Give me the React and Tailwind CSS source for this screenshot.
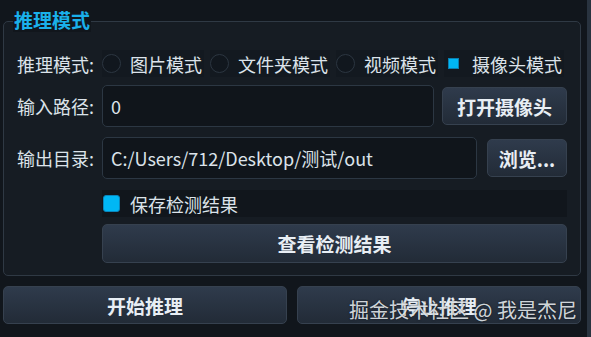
import React from 'react';

const font = { fontFamily: '"Noto Sans CJK SC", "Noto Sans", sans-serif' };

function Radio({ label, checked }) {
  return (
    <div className="flex h-full items-center gap-[9px] bg-[#131920] pr-[2px]">
      <span className="flex h-[19px] w-[19px] items-center justify-center">
        {checked ? (
          <span className="h-[11px] w-[11px] border border-[#0a7fb0] bg-[#00b7f5]" />
        ) : (
          <span className="h-[19px] w-[19px] rounded-full border border-[#2c3641] bg-[#11171e]" />
        )}
      </span>
      <span className="leading-none">{label}</span>
    </div>
  );
}

function Btn({ children, className = '' }) {
  return (
    <button
      className={`flex items-center justify-center rounded-[5px] border border-[#36414f] bg-gradient-to-b from-[#2f3b4c] to-[#222b37] text-[19px] font-bold leading-none text-[#e8eef4] ${className}`}
    >
      {children}
    </button>
  );
}

export default function App() {
  return (
    <div className="relative flex h-[337px] w-[591px] overflow-hidden bg-[#11161c] text-[18px] text-[#dce3ea]" style={font}>
      <div className="flex w-[587px] flex-col pl-[3px] pr-[6px]">
        {/* group box */}
        <div className="relative mt-[21px] h-[255px] w-[578px] rounded-[5px] border border-[#2f3944] bg-[#161c23] px-[13px] pt-[28px]">
          <div className="absolute left-[9px] top-[-14px] bg-[#11161c] px-[1px] text-[19px] font-bold leading-[24px] text-[#1ab0ea]">
            推理模式
          </div>

          <div className="flex h-[27px] items-center">
            <div className="w-[85px] leading-none">推理模式:</div>
            <div className="flex h-full items-center gap-[6px]">
              <Radio label="图片模式" />
              <Radio label="文件夹模式" />
              <Radio label="视频模式" />
              <Radio label="摄像头模式" checked />
            </div>
          </div>

          <div className="mt-[8px] flex h-[42px] items-center">
            <div className="w-[85px]">输入路径:</div>
            <div className="flex h-full w-[332px] items-center rounded-[5px] border border-[#2c3743] bg-[#10151b] px-[8px]">0</div>
            <Btn className="ml-[8px] h-[38px] w-[125px]">打开摄像头</Btn>
          </div>

          <div className="mt-[10px] flex h-[42px] items-center">
            <div className="w-[85px]">输出目录:</div>
            <div className="flex h-full w-[375px] items-center rounded-[5px] border border-[#2c3743] bg-[#10151b] px-[8px]">
              C:/Users/712/Desktop/测试/out
            </div>
            <Btn className="ml-[10px] h-[38px] w-[80px]">浏览...</Btn>
          </div>

          <div className="ml-[85px] mt-[11px] flex h-[27px] items-center bg-[#11161c] pl-[1px]">
            <span className="h-[17px] w-[17px] rounded-[3px] border border-[#0a85bb] bg-[#00b7f5]" />
            <span className="ml-[10px] leading-none">保存检测结果</span>
          </div>

          <Btn className="ml-[85px] mt-[7px] h-[39px] w-[465px]">查看检测结果</Btn>
        </div>

        <div className="mt-[10px] flex gap-[10px]">
          <Btn className="h-[38px] w-[284px]">开始推理</Btn>
          <Btn className="h-[38px] w-[284px]">停止推理</Btn>
        </div>
      </div>
      <div className="h-full w-[4px] bg-[#29333f]" />

      <div className="absolute left-[349px] top-[297px] text-[20px] leading-[26px] text-[#e9eef2]/90 [text-shadow:0_0_2px_rgba(0,0,0,0.6)]">
        掘金技术社区 @ 我是杰尼
      </div>
    </div>
  );
}
